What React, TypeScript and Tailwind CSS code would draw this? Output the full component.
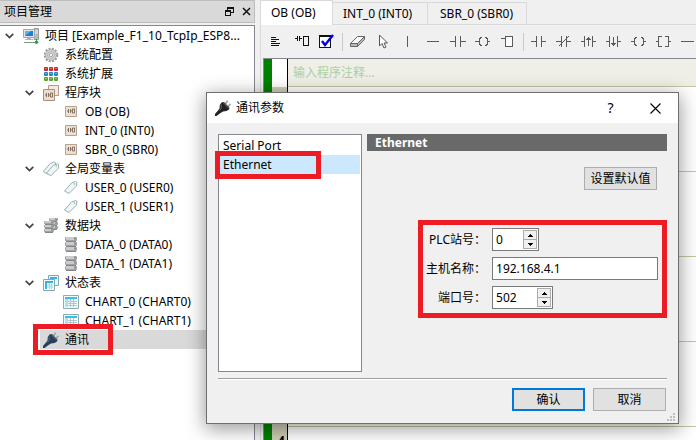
import React, { useState } from "react";

type IconProps = { children: React.ReactNode };

const Glyph = ({ children }: IconProps) => (
  <svg width="16" height="16" viewBox="0 0 16 16" className="block shrink-0" aria-hidden="true">
    {children}
  </svg>
);

const ComputerIcon = () => (
  <Glyph>
    <path d="M11 .5h4.500v11H11z" fill="#b9bcbe" stroke="#8a8e91" strokeWidth=".8" />
    <path d="M12 3h3M12 5h3" stroke="#f2f2f2" />
    <path d="M.5 1.500h11v8h-11z" fill="#e4e6e7" stroke="#a2a7aa" />
    <path d="M2 3h8v5H2z" fill="#1d7fd0" />
    <path d="M2 8V3h6z" fill="#58b4ee" />
    <path d="M4 10h4v1h2v1H2v-1h2z" fill="#b2b6b8" />
    <path d="M1 14.500h14" stroke="#7f9a82" />
    <path d="M13.500 11v3" stroke="#2b9c3a" />
    <circle cx="13.500" cy="14.300" r="1.700" fill="#22a738" />
  </Glyph>
);

const GearIcon = () => (
  <Glyph>
    <circle cx="8" cy="8" r="6.200" fill="none" stroke="#9a9c9e" strokeWidth="2.200" strokeDasharray="2 1.250" />
    <circle cx="8" cy="8" r="5.400" fill="#d0d2d4" stroke="#a6a8aa" strokeWidth=".7" />
    <circle cx="8" cy="8" r="3.400" fill="#dfe0e1" stroke="#a2a4a6" strokeWidth=".7" />
    <circle cx="8" cy="8" r="1.600" fill="#fff" stroke="#8e9092" strokeWidth=".8" />
  </Glyph>
);

const GridIcon = () => (
  <Glyph>
    {["#c9252d", "#1f86c7", "#5aa62b"].map((color, row) =>
      [0, 1, 2].map((col) => (
        <g key={`${row}-${col}`}>
          <rect x={1 + col * 5} y={1 + row * 5} width="4" height="4" rx="1" fill={color} />
          <rect x={2 + col * 5} y={2 + row * 5} width="2" height="1" fill="#fff" opacity=".35" />
        </g>
      )),
    )}
  </Glyph>
);

const ladder = "M0 3h1.500M1.500 1v4M3.500 1v4M3.500 3h1.500M5.500 1h2v4h-2z";

const BlocksIcon = () => (
  <Glyph>
    <path d="M5.500 .5h10v10h-10z" fill="#f3e9df" stroke="#b39d89" />
    <path d="M.5 4.500h11v11h-11z" fill="#eaddd0" stroke="#a8917c" />
    <path d={ladder} transform="translate(2 7)" fill="none" stroke="#6d5a4b" strokeWidth=".8" />
  </Glyph>
);

const BlockIcon = () => (
  <Glyph>
    <path d="M2.500 2.500h11v10h-11z" fill="#ecdfd3" stroke="#b7a28e" />
    <path d={ladder} transform="translate(4 4)" fill="none" stroke="#6d5a4b" strokeWidth=".8" />
  </Glyph>
);

const tagPath = "M.5 11.500L7.500 3.500L11.500 2L13 3L12.500 6.500L5 14z";

const TagsIcon = () => (
  <Glyph>
    <path d={tagPath} transform="translate(-.3 -1)" fill="#eef6f6" stroke="#8fa8ab" strokeWidth=".9" />
    <path d={tagPath} transform="translate(2.800 .8)" fill="#eef6f6" stroke="#8fa8ab" strokeWidth=".9" />
    <circle cx="13.300" cy="5" r=".8" fill="#8fa8ab" />
  </Glyph>
);

const TagIcon = () => (
  <Glyph>
    <path d={tagPath} transform="translate(1 -.5)" fill="#eef6f6" stroke="#8fa8ab" strokeWidth=".9" />
    <circle cx="11.500" cy="4" r=".8" fill="#8fa8ab" />
  </Glyph>
);

const Rack = ({ x, y, w, h }: { x: number; y: number; w: number; h: number }) => (
  <g>
    {[0, 1, 2].map((i) => (
      <g key={i}>
        <rect x={x} y={y + i * h} width={w} height={h - 1} rx="1" fill="#a2a2a6" />
        <rect x={x + 1} y={y + i * h} width={w - 4} height={h - 2} fill="#cbcbcd" />
        <rect x={x + 1} y={y + i * h + h - 1} width={w - 2} height="1" fill="#85858a" />
        <rect x={x + w - 3} y={y + i * h + 1} width="2" height="1" fill="#74a877" />
      </g>
    ))}
  </g>
);

const RacksIcon = () => (
  <Glyph>
    <Rack x={6} y={0} w={9} h={4} />
    <Rack x={1} y={3} w={10} h={4} />
  </Glyph>
);

const RackIcon = () => (
  <Glyph>
    <Rack x={2} y={0} w={12} h={5} />
  </Glyph>
);

const TablesIcon = () => (
  <Glyph>
    <path d="M5.500 .5h10v10h-10z" fill="#eaf7fc" stroke="#86a7b0" />
    <path d="M7 2h7v2H7z" fill="#35b4e6" />
    <path d="M.5 4.500h11v11h-11z" fill="#f4fbfd" stroke="#86a7b0" />
    <path d="M2 6h8v2H2zM2 8h2v6H2z" fill="#35b4e6" />
    <path d="M4 10h6M4 12h6M6.500 8v6M8.500 8v6" stroke="#8ecbe2" strokeWidth=".7" />
  </Glyph>
);

const TableIcon = () => (
  <Glyph>
    <path d="M.5 1.500h15v13H.5z" fill="#f4fbfd" stroke="#8fabae" />
    <path d="M2 3h12v2H2z" fill="#35c0ee" />
    <path d="M2 5h3v8H2z" fill="#a8e2f4" />
    <path d="M5 7.500h9M5 9.500h9M5 11.500h9M7.500 5v8M10.500 5v8" stroke="#a5bcc0" strokeWidth=".8" />
  </Glyph>
);

const PlugIcon = ({ body, shade }: { body: string; shade: string }) => (
  <Glyph>
    <path d="M10 4.500L12.800 .8M12.500 7L15.500 3.800" stroke="#9aa4ad" strokeWidth="1.700" />
    <path d="M6.500 2.500L9 2L14.500 7.500L14 9.500L11.500 11L8 11.500L5.500 13L1.500 16H0v-2L3 10.500L4.500 8.500L4.800 5z" fill={body} />
    <path d="M8.300 2.700L13.800 8.200" stroke={shade} strokeWidth="1" />
    <path d="M6.300 4.500L6 8.500L4.500 10.500" fill="none" stroke={shade} strokeWidth=".8" />
  </Glyph>
);

type Node = { label: string; level: number; icon: React.ReactNode; branch?: boolean; selected?: boolean };

const nodes: Node[] = [
  { label: "项目 [Example_F1_10_TcpIp_ESP8...", level: 0, icon: <ComputerIcon />, branch: true },
  { label: "系统配置", level: 1, icon: <GearIcon /> },
  { label: "系统扩展", level: 1, icon: <GridIcon /> },
  { label: "程序块", level: 1, icon: <BlocksIcon />, branch: true },
  { label: "OB (OB)", level: 2, icon: <BlockIcon /> },
  { label: "INT_0 (INT0)", level: 2, icon: <BlockIcon /> },
  { label: "SBR_0 (SBR0)", level: 2, icon: <BlockIcon /> },
  { label: "全局变量表", level: 1, icon: <TagsIcon />, branch: true },
  { label: "USER_0 (USER0)", level: 2, icon: <TagIcon /> },
  { label: "USER_1 (USER1)", level: 2, icon: <TagIcon /> },
  { label: "数据块", level: 1, icon: <RacksIcon />, branch: true },
  { label: "DATA_0 (DATA0)", level: 2, icon: <RackIcon /> },
  { label: "DATA_1 (DATA1)", level: 2, icon: <RackIcon /> },
  { label: "状态表", level: 1, icon: <TablesIcon />, branch: true },
  { label: "CHART_0 (CHART0)", level: 2, icon: <TableIcon /> },
  { label: "CHART_1 (CHART1)", level: 2, icon: <TableIcon /> },
  { label: "通讯", level: 1, icon: <PlugIcon body="#26405a" shade="#5c7890" />, selected: true },
];

const indent = ["pl-0", "pl-5", "pl-10"];

const TreeRow = ({ node }: { node: Node }) => (
  <li
    role="treeitem"
    aria-level={node.level + 1}
    aria-selected={!!node.selected}
    aria-expanded={node.branch ? true : undefined}
    className={`relative flex h-[19px] ${indent[node.level]}`}
  >
    <span className="flex w-5 shrink-0 items-center pl-[5px]">
      {node.branch && (
        <button type="button" aria-label={`折叠 ${node.label}`}>
          <svg width="9" height="6" viewBox="0 0 9 6" className="block">
            <path d="M.7 .8L4.500 4.600L8.300 .8" fill="none" stroke="#444" strokeWidth="1.700" />
          </svg>
        </button>
      )}
    </span>
    <span className={`flex min-w-0 flex-1 items-center gap-1.5 pl-[3px] ${node.selected ? "bg-[#d9d9d9]" : ""}`}>
      {node.icon}
      <span className="whitespace-nowrap">{node.label}</span>
    </span>
    {node.selected && <span className="absolute -top-1.5 left-[33px] h-[31px] w-20 border-5 border-[#ed1c24]" />}
  </li>
);

const ProjectPanel = () => (
  <aside className="flex w-[255px] shrink-0 flex-col gap-0.5">
    <header className="flex h-[23px] items-center border border-l-0 border-[#bdbdbd] bg-[#d9d9d9] pr-[3px] pl-1">
      <h1 className="flex-1">项目管理</h1>
      <button type="button" aria-label="浮动" className="mr-2">
        <svg width="9" height="9" viewBox="0 0 9 9" className="block" shapeRendering="crispEdges">
          <path d="M2.500 3V.5h6v5H6M2 1.500h7M.5 3.500h5v5h-5zM0 4.500h6" fill="none" stroke="#111" />
        </svg>
      </button>
      <button type="button" aria-label="关闭">
        <svg width="9" height="9" viewBox="0 0 9 9" className="block">
          <path d="M1 1L8 8M8 1L1 8" stroke="#111" strokeWidth="1.500" />
        </svg>
      </button>
    </header>
    <ul role="tree" aria-label="项目管理" className="flex-1 border-t border-r border-[#828790] bg-white">
      {nodes.map((node) => (
        <TreeRow key={node.label} node={node} />
      ))}
    </ul>
  </aside>
);

const tools: { name: string; drawing: React.ReactNode }[][] = [
  [
    { name: "注释", drawing: <path stroke="#111" d="M7 8.500h5M7 10.500h8M7 12.500h5M7 14.500h9M7 16.500h8" /> },
    {
      name: "梯形图块",
      drawing: <path stroke="#111" d="M6 9.500h2M8.500 7v5M10.500 7v5M11 9.500h2M14.500 7.500h5v9h-5z" />,
    },
    {
      name: "编译",
      drawing: (
        <>
          <path stroke="#111" d="M5.500 6.500h11v12h-11zM5 7.500h12" fill="#fff" />
          <path stroke="#0000e6" strokeWidth="2.400" shapeRendering="auto" d="M8 12L11 16L19 6" />
        </>
      ),
    },
  ],
  [
    {
      name: "橡皮",
      drawing: (
        <g shapeRendering="auto">
          <path stroke="#666" d="M5.500 14.500L12.500 7.500H19.500L12.500 14.500z" fill="#fafafa" />
          <path stroke="#666" d="M5.500 14.500v3h7v-3zM12.500 17.500L19.500 10.500v-3L12.500 14.500z" fill="#bbb" />
        </g>
      ),
    },
    {
      name: "选择",
      drawing: (
        <path stroke="#555" shapeRendering="auto" fill="#fff" d="M9.500 6v11l2.500-2.500l2 4.500l2-1l-2-4h3.500z" />
      ),
    },
    { name: "竖线", drawing: <path d="M12.500 7v11" /> },
    { name: "横线", drawing: <path d="M7 12.500h12" /> },
    { name: "触点", drawing: <path d="M5 12.500h5M10.500 7v11M15.500 7v11M16 12.500h5" /> },
    {
      name: "线圈",
      drawing: <path d="M5 12.500h4M11.500 8L9.500 10v5L11.500 17M15.500 8L17.500 10v5L15.500 17M18 12.500h2" />,
    },
    {
      name: "功能框",
      drawing: (
        <>
          <path d="M6 9.500h4" />
          <path d="M10.500 7.500h7v10h-7z" fill="#fff" />
        </>
      ),
    },
  ],
  [
    { name: "常开触点", drawing: <path d="M5 12.500h5M10.500 7v11M15.500 7v11M16 12.500h4" /> },
    { name: "常闭触点", drawing: <path d="M5 12.500h5M10.500 7v11M15.500 7v11M16 12.500h4M8 17L18 7" /> },
    {
      name: "上升沿",
      drawing: <path d="M5 12.500h3M8.500 7v11M16.500 7v11M17 12.500h3M12.500 8v9M10 10.500h5M11 9.500h3" />,
    },
    {
      name: "下降沿",
      drawing: <path d="M5 12.500h3M8.500 7v11M16.500 7v11M17 12.500h3M12.500 8v9M10 14.500h5M11 15.500h3" />,
    },
    {
      name: "输出线圈",
      drawing: <path d="M5 12.500h3M10.500 8L8.500 10v5L10.500 17M15.500 8L17.500 10v5L15.500 17M18 12.500h2" />,
    },
    {
      name: "指令框",
      drawing: <path d="M5 12.500h2M11 7.500H7.500v10H11M14 7.500h3.500v10H14M18 12.500h2" />,
    },
    { name: "连线", drawing: <path d="M5 12.500h13" /> },
  ],
];

const Toolbar = () => (
  <div role="toolbar" aria-label="编辑工具" className="flex h-[33px] shrink-0 items-center overflow-hidden pl-[3px]">
    {tools.map((group, index) => (
      <React.Fragment key={index}>
        {index > 0 && (
          <span className="flex w-1.5 shrink-0 justify-center">
            <span className="h-[18px] w-px bg-[#c8c8c8]" />
          </span>
        )}
        {group.map((tool) => (
          <button key={tool.name} type="button" aria-label={tool.name} className="shrink-0">
            <svg
              width="25"
              height="25"
              viewBox="0 0 25 25"
              className="block"
              fill="none"
              stroke="#5a5a5a"
              shapeRendering="crispEdges"
            >
              {tool.drawing}
            </svg>
          </button>
        ))}
      </React.Fragment>
    ))}
  </div>
);

const Editor = () => (
  <div className="ml-0.5 flex min-h-0 flex-1 overflow-hidden border-t border-l border-[#828790] bg-white">
    <div className="w-2 shrink-0 bg-[#008000]" />
    <div className="flex min-w-0 flex-1 flex-col">
      <div className="flex h-7 shrink-0">
        <div className="w-4 shrink-0 border-r border-black bg-white" />
        <p className="flex flex-1 items-center border-b border-[#c6c6a4] bg-[#efefe7] pl-[5px] text-[#a9cfa5]">
          输入程序注释...
        </p>
      </div>
      {[0, 1, 2, 3].map((row) => (
        <div key={row} className="flex h-[85px] shrink-0">
          <div className="w-4 shrink-0 border-r border-black bg-[#cfceb8]" />
          <div className="flex-1 border-b border-[#c6c6a4]" />
        </div>
      ))}
      <div className="w-4 flex-1 border-r border-black bg-[#cfceb8] pt-1.5 pl-1.5 font-bold">4</div>
    </div>
  </div>
);

const Workspace = () => (
  <main className="flex min-w-0 flex-1 flex-col pl-[5px]">
    <div role="tablist" className="flex h-[25px] shrink-0 items-end">
      <button
        type="button"
        role="tab"
        aria-selected="true"
        className="h-full w-[73px] border border-b-0 border-[#d9d9d9] bg-white pl-2.5 text-left"
      >
        OB (OB)
      </button>
      <button
        type="button"
        role="tab"
        aria-selected="false"
        className="h-[23px] w-[95px] border border-l-0 border-[#d9d9d9] pl-2.5 text-left"
      >
        INT_0 (INT0)
      </button>
      <button
        type="button"
        role="tab"
        aria-selected="false"
        className="h-[23px] w-[99px] border border-l-0 border-[#d9d9d9] pl-3 text-left"
      >
        SBR_0 (SBR0)
      </button>
      <span className="h-px flex-1 bg-[#d9d9d9]" />
    </div>
    <div className="flex min-h-0 flex-1 flex-col border-l border-[#d9d9d9]">
      <Toolbar />
      <Editor />
    </div>
  </main>
);

const SpinField = ({ id, initial, width }: { id: string; initial: number; width: string }) => {
  const [value, setValue] = useState(initial);
  return (
    <div className={`flex h-[23px] border border-[#7a7a7a] bg-white p-px ${width}`}>
      <input
        id={id}
        type="text"
        inputMode="numeric"
        value={value}
        onChange={(event) => setValue(Number(event.target.value) || 0)}
        className="w-full min-w-0 pl-0.5 outline-none"
      />
      <div className="flex w-3.5 shrink-0 flex-col">
        <button
          type="button"
          aria-label="增加"
          onClick={() => setValue(value + 1)}
          className="flex flex-1 items-center justify-center border border-[#acacac] bg-[#f0f0f0]"
        >
          <svg width="5" height="3" viewBox="0 0 5 3" shapeRendering="crispEdges">
            <path d="M2 0h1v1h1v1h1v1H0V2h1V1h1z" />
          </svg>
        </button>
        <button
          type="button"
          aria-label="减少"
          onClick={() => setValue(Math.max(0, value - 1))}
          className="flex flex-1 items-center justify-center border border-t-0 border-[#acacac] bg-[#f0f0f0]"
        >
          <svg width="5" height="3" viewBox="0 0 5 3" shapeRendering="crispEdges">
            <path d="M2 3h1V2h1V1h1V0H0v1h1v1h1z" />
          </svg>
        </button>
      </div>
    </div>
  );
};

const CommunicationDialog = () => (
  <section
    role="dialog"
    aria-label="通讯参数"
    className="absolute top-[92px] left-[206px] w-[473px] border border-[#6e6e6e] bg-[#f0f0f0] shadow-[0_4px_18px_1px_rgba(0,0,0,0.4)]"
  >
    <header className="flex h-[30px] items-center bg-white pl-2">
      <PlugIcon body="#222" shade="#777" />
      <h2 className="flex-1 pl-[5px]">通讯参数</h2>
      <button type="button" aria-label="帮助" className="flex h-full w-[45px] items-center justify-center text-sm">
        ?
      </button>
      <button type="button" aria-label="关闭" className="flex h-full w-[45px] items-center justify-center">
        <svg width="11" height="11" viewBox="0 0 11 11">
          <path d="M.5 .5l10 10M10.500 .5l-10 10" stroke="#000" strokeWidth="1.100" />
        </svg>
      </button>
    </header>

    <div className="flex gap-[5px] px-[11px] pt-[11px]">
      <ul
        role="listbox"
        aria-label="连接方式"
        className="h-[238px] w-36 shrink-0 border border-[#828790] bg-white p-px leading-[19px]"
      >
        <li role="option" aria-selected="false" className="h-[19px] pl-[3px]">
          Serial Port
        </li>
        <li role="option" aria-selected="true" className="relative h-[19px] bg-[#cce8ff] pl-[3px]">
          Ethernet
          <span className="absolute -top-1 -left-[5px] h-7 w-[106px] border-5 border-[#ed1c24]" />
        </li>
      </ul>

      <div className="flex flex-1 flex-col">
        <h3 className="h-[17px] bg-[#696969] pl-2 leading-[17px] font-bold text-white">Ethernet</h3>
        <button
          type="button"
          className="mt-4 mr-2.5 h-[23px] w-[73px] self-end border border-[#adadad] bg-[#e1e1e1] whitespace-nowrap"
        >
          设置默认值
        </button>
        <form className="mt-[30px] ml-[51px] grid grid-cols-[auto_1fr] gap-x-1.5 gap-y-1.5 border-5 border-[#ed1c24] pt-[3px] pr-1 pb-1 pl-[3px]">
          <label htmlFor="station" className="self-center text-right">
            PLC站号：
          </label>
          <SpinField id="station" initial={0} width="w-[47px]" />
          <label htmlFor="host" className="self-center text-right">
            主机名称：
          </label>
          <input
            id="host"
            type="text"
            defaultValue="192.168.4.1"
            className="h-[23px] w-full min-w-0 border border-[#7a7a7a] bg-white pl-[3px] outline-none"
          />
          <label htmlFor="port" className="self-center text-right">
            端口号：
          </label>
          <SpinField id="port" initial={502} width="w-[61px]" />
        </form>
      </div>
    </div>

    <footer className="mx-[11px] mt-1.5 flex justify-end gap-2 border-t border-[#a0a0a0] pt-[9px] pr-px pb-3 shadow-[inset_0_1px_0_#fff]">
      <button type="button" className="h-[23px] w-[73px] border-2 border-[#0078d7] bg-[#e1e1e1]">
        确认
      </button>
      <button type="button" className="h-[23px] w-[73px] border border-[#adadad] bg-[#e1e1e1]">
        取消
      </button>
    </footer>
    <svg
      width="8"
      height="8"
      viewBox="0 0 8 8"
      className="absolute right-[3px] bottom-0.5"
      fill="#bfbfbf"
      shapeRendering="crispEdges"
      aria-hidden="true"
    >
      <path d="M6 0h2v2H6zM3 3h2v2H3zM6 3h2v2H6zM0 6h2v2H0zM3 6h2v2H3zM6 6h2v2H6z" />
    </svg>
  </section>
);

export default function App() {
  return (
    <div className="relative flex h-screen overflow-hidden bg-[#f0f0f0] font-['Noto_Sans','Noto_Sans_CJK_SC',sans-serif] text-xs leading-4 text-black">
      <ProjectPanel />
      <Workspace />
      <CommunicationDialog />
    </div>
  );
}
